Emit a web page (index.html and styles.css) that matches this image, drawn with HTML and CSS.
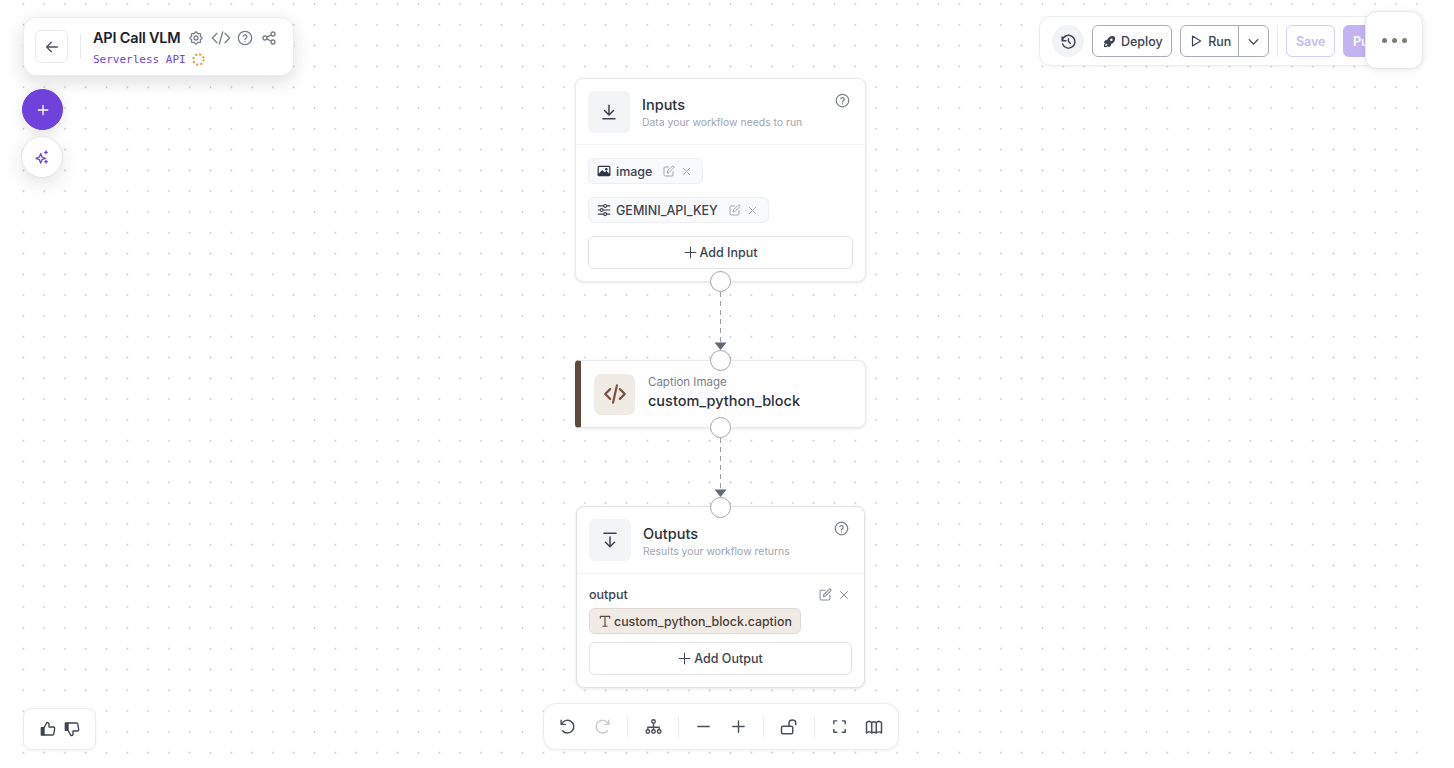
FILE: index.html
```html
<!DOCTYPE html>
<html lang="en">
<head>
  <meta charset="UTF-8" />
  <meta name="viewport" content="width=device-width, initial-scale=1" />
  <title>API Call VLM</title>
  <link rel="stylesheet" href="styles.css">
</head>
<body>
<div class="canvas">
  <div class="dots"></div>

  <!-- edges between nodes -->
  <svg class="edges" width="1454" height="768">
    <path d="M720.5 292V342M720.5 438V489" stroke="#9a9ea6" stroke-width="1" stroke-dasharray="5 4" fill="none"/>
    <path d="M714.5 342.5h12l-6 7.5zM714.5 489.5h12l-6 7.5z" fill="#636875"/>
  </svg>

  <!-- top left title panel -->
  <div class="panel title-panel">
    <button class="back-btn">
      <svg class="ic" width="16" height="16" viewBox="0 0 24 24"><path d="M20 12H4M11 5l-7 7 7 7"/></svg>
    </button>
    <div class="vline"></div>
    <div class="title-text">
      <div class="title-row">
        <span class="title">API Call VLM</span>
        <svg class="ic grey" width="16" height="16" viewBox="0 0 24 24"><path d="M10.3 4.3c.4-1.8 3-1.8 3.4 0a1.7 1.7 0 0 0 2.6 1.1c1.5-.9 3.3.8 2.4 2.4a1.7 1.7 0 0 0 1 2.5c1.8.4 1.8 3 0 3.4a1.7 1.7 0 0 0-1 2.6c.9 1.5-.9 3.3-2.4 2.4a1.7 1.7 0 0 0-2.6 1c-.4 1.8-3 1.8-3.4 0a1.7 1.7 0 0 0-2.6-1c-1.5.9-3.3-.9-2.4-2.4a1.7 1.7 0 0 0-1-2.6c-1.8-.4-1.8-3 0-3.4a1.7 1.7 0 0 0 1-2.5c-.9-1.6.9-3.3 2.4-2.4a1.7 1.7 0 0 0 2.6-1.1z"/><circle cx="12" cy="12" r="3"/></svg>
        <svg class="ic grey" width="20" height="16" viewBox="0 0 30 24"><path d="M9 5l-7 7 7 7M21 5l7 7-7 7M17.5 3l-5 18"/></svg>
        <svg class="ic grey" width="16" height="16" viewBox="0 0 24 24"><circle cx="12" cy="12" r="10"/><path d="M9.2 9.2a2.9 2.9 0 0 1 5.6 1c0 1.9-2.8 2.4-2.8 4M12 17.4v.1"/></svg>
        <svg class="ic grey share" width="16" height="16" viewBox="0 0 24 24"><circle cx="6" cy="12" r="3"/><circle cx="18" cy="6" r="3"/><circle cx="18" cy="18" r="3"/><path d="M8.7 10.7l6.6-3.4M8.7 13.3l6.6 3.4"/></svg>
      </div>
      <div class="sub-row">
        <span class="mono">Serverless API</span>
        <svg width="13" height="13" viewBox="0 0 13 13" fill="none"><circle cx="6.5" cy="6.5" r="5.2" stroke="#e59a2e" stroke-width="2" stroke-dasharray="2 2.1"/></svg>
      </div>
    </div>
  </div>

  <button class="fab fab-add">
    <svg class="ic" width="16" height="16" viewBox="0 0 24 24"><path d="M12 5v14M5 12h14"/></svg>
  </button>
  <button class="fab fab-magic">
    <svg width="16" height="16" viewBox="0 0 24 24" fill="none" stroke="#6f3fdc" stroke-width="2" stroke-linejoin="round"><path d="M10 7l2 5 5 2-5 2-2 5-2-5-5-2 5-2z"/><path d="M18 3v4M16 5h4M18 17v4M16 19h4" stroke-linecap="round"/></svg>
  </button>

  <!-- top right toolbar -->
  <div class="panel top-bar">
    <button class="history">
      <svg class="ic" width="17" height="17" viewBox="0 0 24 24"><path d="M12 8v4l2.5 2.5"/><path d="M3.1 11a9 9 0 1 1 .5 4.5M3 5.5V11h5.5"/></svg>
    </button>
    <button class="btn">
      <svg class="ic" width="15" height="15" viewBox="0 0 24 24"><path d="M4 13a8 8 0 0 1 7 7a6 6 0 0 0 3-5a9 9 0 0 0 6-8a3 3 0 0 0-3-3a9 9 0 0 0-8 6a6 6 0 0 0-5 3z" fill="#3d4350"/><path d="M7 14a6 6 0 0 0-3 6a6 6 0 0 0 6-3"/><circle cx="15" cy="9" r="1" fill="#fff" stroke="#fff"/></svg>
      Deploy
    </button>
    <div class="split">
      <span class="split-main">
        <svg class="ic" width="14" height="14" viewBox="0 0 24 24"><path d="M6 3.5v17l14-8.5z"/></svg>
        Run
      </span>
      <span class="split-arrow">
        <svg class="ic" width="15" height="15" viewBox="0 0 24 24"><path d="M5 9l7 7 7-7"/></svg>
      </span>
    </div>
    <div class="vline tall"></div>
    <button class="btn save">Save</button>
    <button class="publish">Publish</button>
  </div>
  <button class="more"><i></i><i></i><i></i></button>

  <!-- inputs node -->
  <section class="node inputs">
    <header class="node-head">
      <div class="node-icon">
        <svg class="ic" width="18" height="18" viewBox="0 0 24 24"><path d="M12 3v12M6 10l6 6 6-6M4 21h16"/></svg>
      </div>
      <div class="node-titles">
        <h2>Inputs</h2>
        <p>Data your workflow needs to run</p>
      </div>
      <svg class="ic grey help" width="15" height="15" viewBox="0 0 24 24"><circle cx="12" cy="12" r="10"/><path d="M9.2 9.2a2.9 2.9 0 0 1 5.6 1c0 1.9-2.8 2.4-2.8 4M12 17.4v.1"/></svg>
    </header>
    <div class="node-body">
      <div class="chip">
        <svg width="14" height="14" viewBox="0 0 24 24" fill="none" stroke="#2f3542" stroke-width="2.2"><rect x="2" y="4" width="20" height="16" rx="2"/><path d="M3 18l6-6 4 4 3-3 5 5z" fill="#2f3542"/><circle cx="16" cy="9" r="1.2"/></svg>
        <span>image</span>
        <svg class="ic light edit" width="12" height="12" viewBox="0 0 24 24"><path d="M11 4H4a2 2 0 0 0-2 2v14a2 2 0 0 0 2 2h14a2 2 0 0 0 2-2v-7"/><path d="M18.5 2.5a2.1 2.1 0 0 1 3 3L12 15l-4 1 1-4z"/></svg>
        <svg class="ic light" width="11" height="11" viewBox="0 0 24 24"><path d="M5 5l14 14M19 5L5 19"/></svg>
      </div>
      <div class="chip">
        <svg class="ic dark" width="14" height="14" viewBox="0 0 24 24"><path d="M2 5h9M17 5h5M2 12h3M11 12h11M2 19h9M17 19h5"/><circle cx="14" cy="5" r="2.5"/><circle cx="8" cy="12" r="2.5"/><circle cx="14" cy="19" r="2.5"/></svg>
        <span>GEMINI_API_KEY</span>
        <svg class="ic light edit" width="12" height="12" viewBox="0 0 24 24"><path d="M11 4H4a2 2 0 0 0-2 2v14a2 2 0 0 0 2 2h14a2 2 0 0 0 2-2v-7"/><path d="M18.5 2.5a2.1 2.1 0 0 1 3 3L12 15l-4 1 1-4z"/></svg>
        <svg class="ic light" width="11" height="11" viewBox="0 0 24 24"><path d="M5 5l14 14M19 5L5 19"/></svg>
      </div>
      <button class="add-btn">
        <svg class="ic dark" width="13" height="13" viewBox="0 0 24 24"><path d="M12 2v20M2 12h20"/></svg>
        Add Input
      </button>
    </div>
  </section>

  <!-- python block -->
  <section class="node block">
    <div class="block-icon">
      <svg class="ic" width="26" height="26" viewBox="0 0 24 24"><path d="M7.5 7.5L3 12l4.5 4.5M16.5 7.5L21 12l-4.5 4.5M13.8 4l-3.6 16"/></svg>
    </div>
    <div class="block-text">
      <div class="block-label">Caption Image</div>
      <div class="block-name">custom_python_block</div>
    </div>
  </section>

  <!-- outputs node -->
  <section class="node outputs">
    <header class="node-head">
      <div class="node-icon">
        <svg class="ic" width="18" height="18" viewBox="0 0 24 24"><path d="M4 3h16M12 8v13M6 15l6 6 6-6"/></svg>
      </div>
      <div class="node-titles">
        <h2>Outputs</h2>
        <p>Results your workflow returns</p>
      </div>
      <svg class="ic grey help" width="15" height="15" viewBox="0 0 24 24"><circle cx="12" cy="12" r="10"/><path d="M9.2 9.2a2.9 2.9 0 0 1 5.6 1c0 1.9-2.8 2.4-2.8 4M12 17.4v.1"/></svg>
    </header>
    <div class="node-body out-body">
      <div class="out-row">
        <span>output</span>
        <svg class="ic soft" width="13" height="13" viewBox="0 0 24 24"><path d="M11 4H4a2 2 0 0 0-2 2v14a2 2 0 0 0 2 2h14a2 2 0 0 0 2-2v-7"/><path d="M18.5 2.5a2.1 2.1 0 0 1 3 3L12 15l-4 1 1-4z"/></svg>
        <svg class="ic soft" width="12" height="12" viewBox="0 0 24 24"><path d="M5 5l14 14M19 5L5 19"/></svg>
      </div>
      <div class="ref-chip">
        <svg class="ic brown" width="14" height="14" viewBox="0 0 24 24"><path d="M4 7V4h16v3M12 4v17M8.5 21h7"/></svg>
        custom_python_block.caption
      </div>
      <button class="add-btn">
        <svg class="ic dark" width="13" height="13" viewBox="0 0 24 24"><path d="M12 2v20M2 12h20"/></svg>
        Add Output
      </button>
    </div>
  </section>

  <!-- node handles -->
  <span class="handle h1"></span>
  <span class="handle h2"></span>
  <span class="handle h3"></span>
  <span class="handle h4"></span>

  <!-- feedback -->
  <div class="panel feedback">
    <svg class="ic dark" width="16" height="16" viewBox="0 0 24 24"><path d="M2 10h4v11H2z" fill="#3d4350"/><path d="M6 10l4.5-8a3 3 0 0 1 3 3v4h6.5a2 2 0 0 1 2 2.3l-1.3 8A2 2 0 0 1 18.7 21H6"/></svg>
    <svg class="ic dark" width="16" height="16" viewBox="0 0 24 24"><path d="M2 3h4v11H2z" fill="#3d4350"/><path d="M6 14l4.5 8a3 3 0 0 0 3-3v-4h6.5a2 2 0 0 0 2-2.3l-1.3-8A2 2 0 0 0 18.7 3H6"/></svg>
  </div>

  <!-- bottom toolbar -->
  <div class="panel controls">
    <button class="ctl">
      <svg class="ic" width="17" height="17" viewBox="0 0 24 24"><path d="M3 3v6h6"/><path d="M3.5 9a9 9 0 1 1 1.5 9"/></svg>
    </button>
    <button class="ctl off">
      <svg class="ic" width="17" height="17" viewBox="0 0 24 24"><path d="M21 3v6h-6"/><path d="M20.5 9a9 9 0 1 0-1.5 9"/></svg>
    </button>
    <div class="vline ctl-line"></div>
    <button class="ctl">
      <svg class="ic" width="17" height="17" viewBox="0 0 24 24"><circle cx="12" cy="5" r="2.5"/><circle cx="4" cy="19" r="2.5"/><circle cx="12" cy="19" r="2.5"/><circle cx="20" cy="19" r="2.5"/><path d="M12 8v8M4 16v-3h16v3"/></svg>
    </button>
    <div class="vline ctl-line"></div>
    <button class="ctl">
      <svg class="ic" width="17" height="17" viewBox="0 0 24 24"><path d="M4 12h16"/></svg>
    </button>
    <button class="ctl">
      <svg class="ic" width="17" height="17" viewBox="0 0 24 24"><path d="M12 4v16M4 12h16"/></svg>
    </button>
    <div class="vline ctl-line"></div>
    <button class="ctl">
      <svg class="ic" width="18" height="18" viewBox="0 0 24 24"><rect x="2" y="11" width="15" height="10" rx="2"/><path d="M12 11V7a4.5 4.5 0 0 1 9 0v2"/></svg>
    </button>
    <div class="vline ctl-line"></div>
    <button class="ctl">
      <svg class="ic" width="17" height="17" viewBox="0 0 24 24"><path d="M4 8V4h4M16 4h4v4M4 16v4h4M20 16v4h-4"/></svg>
    </button>
    <button class="ctl">
      <svg class="ic" width="18" height="18" viewBox="0 0 24 24"><path d="M2 6c2-2 5-2 7 0 2-1.5 4-1.5 6 0 2-2 5-2 7 0v14c-2-2-5-2-7 0-2-1.5-4-1.5-6 0-2-2-5-2-7 0zM9 6v14M15 6v14"/></svg>
    </button>
  </div>

</div>
</body>
</html>
```

FILE: styles.css
```css
* {
  box-sizing: border-box;
}
html, body {
  margin: 0;
  height: 100%;
  overflow: hidden;
}
body {
  font-family: Inter, "Noto Sans", sans-serif;
  color: #2b303b;
  background: #fff;
}
button {
  font-family: inherit;
  cursor: pointer;
}
h2, p {
  margin: 0;
}

.canvas {
  position: relative;
  width: 1454px;
  height: 768px;
  overflow: hidden;
  background: #fff;
}
.dots {
  position: absolute;
  left: 12.9px;
  top: 0;
  width: 1414px;
  height: 768px;
  background-image: radial-gradient(circle, #b4b8c0 0.7px, transparent 1.1px);
  background-size: 20.8px 20.8px;
  background-position: 0 -6.4px;
}
.edges {
  position: absolute;
  left: 0;
  top: 0;
}

.ic {
  fill: none;
  stroke: currentColor;
  stroke-width: 2;
  stroke-linecap: round;
  stroke-linejoin: round;
  flex: none;
}
.ic.grey { color: #7b808a; }
.ic.soft { color: #8d919a; }
.ic.light { color: #a3a8b2; }
.ic.dark { color: #3d4350; }
.ic.brown { color: #5f4a3e; }

.panel {
  position: absolute;
  background: #fff;
  border: 1px solid #ebecf0;
  display: flex;
  align-items: center;
}
.vline {
  width: 1px;
  background: #e8e9ed;
  flex: none;
}

/* title panel */
.title-panel {
  left: 23px;
  top: 17px;
  width: 271px;
  height: 59px;
  border-radius: 13px;
  padding: 0 11px;
  box-shadow: 0 6px 18px rgba(30, 30, 50, 0.14);
}
.back-btn {
  width: 33px;
  height: 33px;
  border: 1px solid #e8e9ed;
  border-radius: 6px;
  background: #fff;
  color: #4a4f5a;
  display: flex;
  align-items: center;
  justify-content: center;
  padding: 0;
}
.title-panel .vline {
  height: 25px;
  margin: 0 12px;
}
.title-text {
  padding-top: 2px;
}
.title-row {
  display: flex;
  align-items: center;
  gap: 6.5px;
}
.title {
  font-size: 14.5px;
  font-weight: 600;
  color: #1c2130;
  margin-right: 1px;
  letter-spacing: -0.2px;
}
.share {
  margin-left: 1px;
}
.sub-row {
  display: flex;
  align-items: center;
  gap: 6px;
  margin-top: 7px;
}
.mono {
  font-family: "DejaVu Sans Mono", "Liberation Mono", monospace;
  font-size: 11px;
  color: #7044d8;
}

/* round buttons on the left */
.fab {
  position: absolute;
  border-radius: 50%;
  display: flex;
  align-items: center;
  justify-content: center;
  padding: 0;
}
.fab-add {
  left: 22px;
  top: 89px;
  width: 41px;
  height: 41px;
  background: #6f42dc;
  border: 1px solid #6f42dc;
  color: #fff;
  box-shadow: 0 4px 14px rgba(30, 30, 50, 0.12);
}
.fab-magic {
  left: 21px;
  top: 136px;
  width: 42px;
  height: 42px;
  background: #fff;
  border: 1px solid #e3e4e8;
  box-shadow: 0 6px 18px rgba(30, 30, 50, 0.12);
}

/* top bar, its right end sits under the more button */
.top-bar {
  left: 1039px;
  top: 16px;
  height: 50px;
  border-radius: 12px;
  padding: 0 12px;
  gap: 8px;
  box-shadow: 0 1px 3px rgba(30, 30, 50, 0.05);
}
.top-bar > * {
  flex: none;
}
.history {
  width: 32px;
  height: 32px;
  border-radius: 50%;
  border: none;
  background: #f2f3f5;
  color: #3d4350;
  display: flex;
  align-items: center;
  justify-content: center;
  padding: 0;
}
.btn {
  height: 32px;
  padding: 0 8.5px;
  border: 1px solid #a9adb3;
  border-radius: 6px;
  background: #fff;
  color: #3d4350;
  font-size: 12.5px;
  font-weight: 500;
  display: flex;
  align-items: center;
  gap: 4.5px;
}
.split {
  height: 32px;
  border: 1px solid #a9adb3;
  border-radius: 6px;
  display: flex;
  font-size: 12.5px;
  font-weight: 500;
  color: #3d4350;
}
.split-main {
  display: flex;
  align-items: center;
  gap: 5px;
  padding: 0 7px 0 8px;
  border-right: 1px solid #a9adb3;
}
.split-arrow {
  width: 29px;
  display: flex;
  align-items: center;
  justify-content: center;
}
.vline.tall {
  height: 32px;
}
.save {
  border-color: #d6cdf5;
  color: #c7b9f2;
  font-weight: 600;
}
.publish {
  height: 32px;
  padding: 0 10px;
  border: none;
  border-radius: 6px;
  background: #c3b3f1;
  color: #fff;
  font-size: 12.5px;
  font-weight: 600;
}
.more {
  position: absolute;
  left: 1365px;
  top: 11px;
  width: 58px;
  height: 58px;
  border: 1px solid #e6e7ea;
  border-radius: 12px;
  background: #fff;
  box-shadow: 0 1px 6px rgba(30, 30, 50, 0.1);
  display: flex;
  align-items: center;
  justify-content: center;
  gap: 5px;
  padding: 0;
}
.more i {
  width: 5px;
  height: 5px;
  border-radius: 50%;
  background: #7d7d78;
}

/* nodes */
.node {
  position: absolute;
  background: #fff;
  border: 1px solid #e8e9ed;
  border-radius: 8px;
  box-shadow: 0 1px 3px rgba(30, 30, 50, 0.1);
}
.inputs {
  left: 575px;
  top: 78px;
  width: 291px;
  height: 204px;
}
.outputs {
  left: 576px;
  top: 506px;
  width: 289px;
  height: 182px;
  border-color: #e0e1e6;
}
.node-head {
  position: relative;
  display: flex;
  align-items: center;
  gap: 12px;
  padding: 12px;
  height: 66px;
  border-bottom: 1px solid #f2f3f5;
}
.outputs .node-head {
  height: 67px;
}
.node-icon {
  width: 42px;
  height: 42px;
  border-radius: 6px;
  background: #f3f4f6;
  color: #3d4350;
  display: flex;
  align-items: center;
  justify-content: center;
  flex: none;
}
.node-titles {
  padding-top: 2px;
}
.outputs .node-titles {
  padding-top: 4px;
}
.node-titles h2 {
  font-size: 14.5px;
  font-weight: 500;
  color: #2b303b;
  line-height: 18px;
}
.node-titles p {
  font-size: 10.4px;
  color: #a0a5ae;
  line-height: 14px;
  margin-top: 2px;
}
.help {
  position: absolute;
  right: 15px;
  top: 14px;
}
.node-body {
  padding: 13px 12px 0;
  display: flex;
  flex-direction: column;
  align-items: flex-start;
}
.chip {
  height: 26px;
  padding: 0 10px 0 8px;
  border: 1px solid #eceef2;
  border-radius: 6px;
  background: #f8f9fb;
  font-size: 12.5px;
  font-weight: 500;
  color: #3d4350;
  display: flex;
  align-items: center;
  gap: 5px;
  margin-bottom: 13px;
}
.chip .edit {
  margin-left: 6px;
}
.chip .edit + .ic {
  margin-left: 1px;
}
.add-btn {
  width: 100%;
  height: 33px;
  border: 1px solid #e2e3e8;
  border-radius: 6px;
  background: #fff;
  color: #3d4350;
  font-size: 12.5px;
  font-weight: 500;
  display: flex;
  align-items: center;
  justify-content: center;
  gap: 3px;
}
.add-btn .ic {
  stroke-width: 1.8;
}
.out-body {
  padding-top: 12px;
}
.out-row {
  width: 100%;
  display: flex;
  align-items: center;
  gap: 6px;
  padding-right: 2px;
  font-size: 12.5px;
  font-weight: 500;
  color: #3d4350;
  margin-bottom: 5px;
  height: 17px;
}
.out-row span {
  flex: 1;
}
.ref-chip {
  height: 26px;
  width: 212px;
  padding: 0 8px;
  border: 1px solid #e0d9d3;
  border-radius: 6px;
  background: #f1ebe6;
  color: #4a4038;
  font-size: 12.4px;
  font-weight: 500;
  white-space: nowrap;
  display: flex;
  align-items: center;
  gap: 2px;
  margin-bottom: 8px;
}

/* python block */
.block {
  left: 575px;
  top: 360px;
  width: 291px;
  height: 68px;
  border-left: 6px solid #5f4a3e;
  display: flex;
  align-items: center;
  gap: 13px;
  padding-left: 13px;
  border-radius: 4px 8px 8px 4px;
}
.block-icon {
  width: 41px;
  height: 41px;
  border-radius: 7px;
  background: #f1ebe6;
  color: #7a5340;
  display: flex;
  align-items: center;
  justify-content: center;
}
.block-text {
  padding-bottom: 3px;
}
.block-label {
  font-size: 11.5px;
  color: #7b808a;
  line-height: 15px;
}
.block-name {
  font-size: 14.5px;
  font-weight: 500;
  color: #2b303b;
  line-height: 18px;
  margin-top: 2px;
}

/* handles */
.handle {
  position: absolute;
  left: 710px;
  width: 21px;
  height: 21px;
  border-radius: 50%;
  background: #fff;
  border: 1px solid #a0a4ab;
}
.h1 { top: 271px; }
.h2 { top: 350px; }
.h3 { top: 417px; }
.h4 { top: 497px; }

/* feedback */
.feedback {
  left: 23px;
  top: 708px;
  width: 73px;
  height: 42px;
  border-radius: 8px;
  justify-content: center;
  gap: 8px;
  box-shadow: 0 1px 3px rgba(30, 30, 50, 0.05);
}

/* bottom controls */
.controls {
  left: 543px;
  top: 703px;
  width: 356px;
  height: 47px;
  border-radius: 13px;
  padding: 0 13px;
  justify-content: space-between;
  box-shadow: 0 1px 3px rgba(30, 30, 50, 0.05);
}
.ctl {
  width: 21px;
  height: 21px;
  padding: 0;
  border: none;
  background: none;
  color: #4a4f5a;
  display: flex;
  align-items: center;
  justify-content: center;
}
.ctl.off {
  color: #c9cbd0;
}
.ctl-line {
  height: 20px;
}
```
